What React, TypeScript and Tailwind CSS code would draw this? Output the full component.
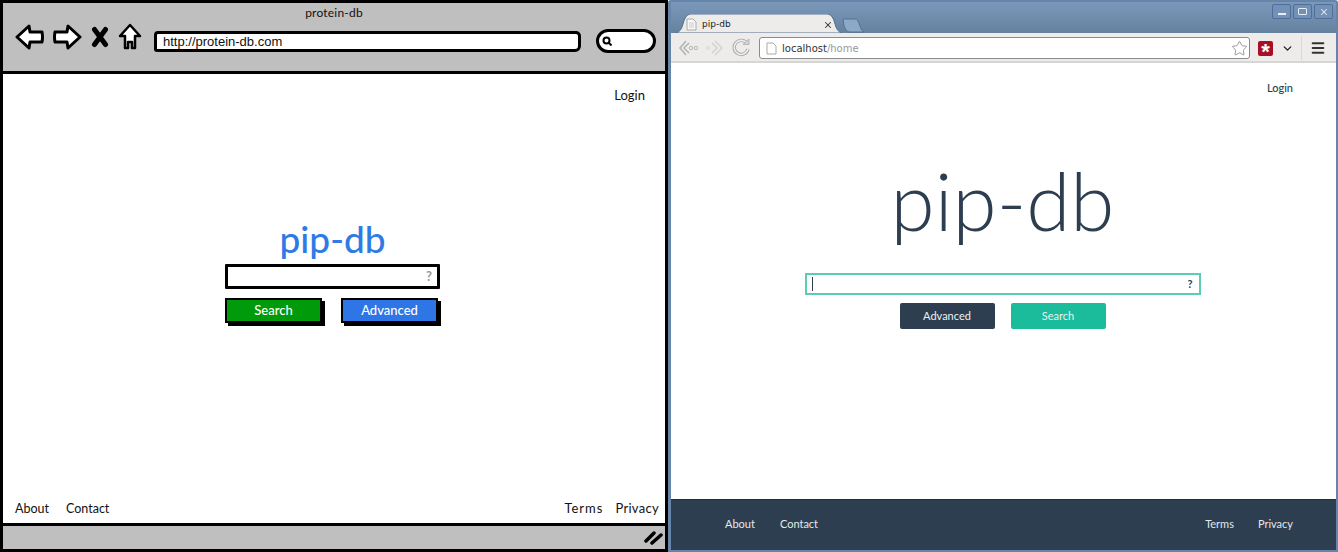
import { Star, X, ChevronDown, Menu } from "lucide-react";

function SketchIcons() {
  return (
    <div className="flex items-center shrink-0">
      <svg width="30" height="28" viewBox="0 0 30 28" className="ml-[12px]">
        <path d="M2 14 L14 3 L15 9 L27 9 Q28 14 27 19 L15 19 L14 25 Z" fill="#fff" stroke="#000" strokeWidth="3" strokeLinejoin="round" />
      </svg>
      <svg width="30" height="28" viewBox="0 0 30 28" className="ml-[7px]">
        <path d="M28 14 L16 3 L15 9 L3 9 Q2 14 3 19 L15 19 L16 25 Z" fill="#fff" stroke="#000" strokeWidth="3" strokeLinejoin="round" />
      </svg>
      <svg width="18" height="22" viewBox="0 0 18 22" className="ml-[9px]">
        <path d="M3.5 3.5 L14.5 18.5 M14.5 3.5 L3.5 18.5" fill="none" stroke="#000" strokeWidth="5" strokeLinecap="round" />
      </svg>
      <svg width="24" height="28" viewBox="0 0 24 28" className="ml-[9px]">
        <path d="M12 2 L22 13 L17 13 L17 25 L14 25 L14 19 L10 19 L10 25 L7 25 L7 13 L2 13 Z" fill="#fff" stroke="#000" strokeWidth="2.5" strokeLinejoin="round" />
      </svg>
    </div>
  );
}

function Mockup() {
  return (
    <div className="w-[668px] h-[552px] shrink-0 flex flex-col border-[3px] border-black bg-white font-['Lato','Liberation_Sans',sans-serif] text-[#111]">
      <div className="h-[71px] shrink-0 bg-[#bfbfbf] border-b-[3px] border-black">
        <div className="text-center text-[12px] leading-[16px] pt-[2px] tracking-[0.2px]">protein-db</div>
        <div className="flex items-center">
          <SketchIcons />
          <div className="ml-[12px] mt-[8px] w-[427px] h-[21px] bg-white border-[3px] border-black rounded-[4px_5px_6px_3px] flex items-center pl-[6px] text-[13px] leading-none font-['Liberation_Sans',sans-serif]">
            http://protein-db.com
          </div>
          <div className="ml-[15px] mt-[8px] w-[60px] h-[24px] bg-white border-[3px] border-black rounded-full flex items-center pl-[3px]">
            <svg width="10" height="10" viewBox="0 0 10 10">
              <circle cx="4.5" cy="4.5" r="3" fill="none" stroke="#000" strokeWidth="2" />
              <path d="M7 7 L9.5 9.5" stroke="#000" strokeWidth="2" />
            </svg>
          </div>
        </div>
      </div>

      <div className="flex-1 flex flex-col min-h-0">
        <div className="flex justify-end pr-[20px] pt-[13px] text-[13px] leading-[17px]">Login</div>
        <div className="ml-[222px] w-[215px] mt-[113px] text-center text-[#2f7ae5] text-[37px] leading-[44px] font-medium">pip-db</div>
        <div className="ml-[222px] mt-[3px] w-[215px] h-[25px] border-[3px] border-black rounded-[1px] bg-white flex items-center justify-end pr-[5px] text-[13px] font-bold text-[#999]">
          ?
        </div>
        <div className="ml-[222px] mt-[9px] flex gap-[19px]">
          <button className="w-[97px] h-[25px] bg-[#009a0a] border-2 border-black shadow-[3px_3px_0_#000] text-white text-[13px] font-medium leading-none">
            Search
          </button>
          <button className="w-[97px] h-[25px] bg-[#2e75e6] border-2 border-black shadow-[3px_3px_0_#000] text-white text-[13px] font-medium leading-none">
            Advanced
          </button>
        </div>
        <div className="mt-auto flex justify-between pl-[12px] pr-[6px] pb-[6px] text-[13px] leading-[17px]">
          <div className="flex gap-[17px] text-[12.5px]">
            <span>About</span>
            <span>Contact</span>
          </div>
          <div className="flex gap-[12px]">
            <span className="tracking-[1px]">Terms</span>
            <span className="tracking-[0.3px]">Privacy</span>
          </div>
        </div>
      </div>

      <div className="h-[26px] shrink-0 bg-[#bfbfbf] border-t-[3px] border-black flex items-center justify-end pr-[1px]">
        <svg width="20" height="16" viewBox="0 0 20 16">
          <path d="M2 11 L10 3 M8 13 L17 5" stroke="#000" strokeWidth="3.5" strokeLinecap="round" />
        </svg>
      </div>
    </div>
  );
}

function WindowButton({ children }: { children: React.ReactNode }) {
  return (
    <div className="w-[19px] h-[15px] rounded-[2px] border border-[#4f6e98] bg-[#7391b6] flex items-center justify-center text-[#e8eef5]">
      {children}
    </div>
  );
}

function Browser() {
  return (
    <div className="w-[670px] h-[552px] shrink-0 flex flex-col border-[2px] border-l-[3px] border-[#6784a9] rounded-t-[3px] bg-white font-['Lato','Liberation_Sans',sans-serif] text-[#2c3e50]">
      <div className="h-[31px] shrink-0 bg-gradient-to-b from-[#7b98bb] to-[#64829f] flex items-end relative pl-[5px]">
        <div className="relative w-[166px] h-[19px]">
          <svg width="166" height="19" viewBox="0 0 166 19" className="absolute inset-0">
            <path d="M0 19 Q5 18 7 10 Q9 1 14 0 L152 0 Q157 1 159 10 Q161 18 166 19 Z" fill="#edecea" stroke="#56708f" strokeWidth="1" />
          </svg>
          <div className="relative flex items-center h-full pt-[2px] pl-[10px] pr-[9px] font-['DejaVu_Sans',sans-serif]">
            <svg width="11" height="13" viewBox="0 0 11 13">
              <path d="M1 1 H7 L10 4 V12 H1 Z" fill="#f7f7f7" stroke="#aaa" />
              <path d="M3 5H8 M3 7H8 M3 9H8" stroke="#ccc" />
            </svg>
            <span className="ml-[5px] text-[9px] text-[#222]">pip-db</span>
            <X size={10} strokeWidth={2.5} className="ml-auto text-[#333]" />
          </div>
        </div>
        <svg width="24" height="15" viewBox="0 0 24 15" className="-ml-[1px]">
          <path d="M2 1 L14 1 Q17 1 19 8 Q20 13 23 14 L8 14 Q5 14 3 8 Z" fill="#8ea8c8" stroke="#56708f" />
        </svg>
        <div className="absolute right-[3px] top-[2px] flex gap-[2px]">
          <WindowButton><span className="block w-[8px] h-[2px] bg-[#e8eef5] mt-[4px]" /></WindowButton>
          <WindowButton><span className="block w-[9px] h-[7px] border border-[#e8eef5] rounded-[1px]" /></WindowButton>
          <WindowButton><X size={10} strokeWidth={2.5} /></WindowButton>
        </div>
      </div>

      <div className="h-[30px] shrink-0 bg-[#edecea] border-b-2 border-[#d6d6d4] flex items-center pt-[2px]">
        <svg width="22" height="18" viewBox="0 0 22 18" className="ml-[6px]">
          <path d="M9 2 L3 9 L9 16 M12 4 L7 9 L12 14" fill="none" stroke="#b4b4b4" strokeWidth="1.6" />
          <circle cx="14" cy="9" r="1.7" fill="none" stroke="#b4b4b4" />
          <circle cx="19" cy="9" r="1.7" fill="none" stroke="#b4b4b4" />
        </svg>
        <svg width="20" height="18" viewBox="0 0 20 18" className="ml-[6px]">
          <path d="M10 2 L17 9 L10 16 M7 4 L12 9 L7 14" fill="none" stroke="#d4d4d4" strokeWidth="1.6" />
          <circle cx="3" cy="9" r="1.5" fill="none" stroke="#d8d8d8" />
        </svg>
        <svg width="20" height="20" viewBox="0 0 20 20" className="ml-[6px]">
          <path d="M16 5.5 A7 7 0 1 0 17 11" fill="none" stroke="#ababab" strokeWidth="3.4" />
          <path d="M16 5.5 A7 7 0 1 0 17 11" fill="none" stroke="#ececec" strokeWidth="1.6" />
          <path d="M12 6.5 H18 V1 Z" fill="#d6d6d6" stroke="#ababab" strokeWidth="0.8" />
        </svg>
        <div className="ml-[8px] w-[491px] h-[22px] bg-white border border-[#8b8b8b] rounded-[3px] flex items-center pl-[6px] text-[10px] font-['DejaVu_Sans',sans-serif]">
          <svg width="11" height="13" viewBox="0 0 11 13">
            <path d="M1 1 H7 L10 4 V12 H1 Z" fill="#fff" stroke="#aaa" />
          </svg>
          <span className="ml-[5px] text-[#333]">localhost</span>
          <span className="text-[#999]">/home</span>
          <Star size={17} strokeWidth={1.2} className="ml-auto mr-[1px] text-[#888]" />
        </div>
        <div className="ml-[8px] w-[15px] h-[15px] rounded-[2px] bg-[#a80f26] flex items-center justify-center text-white text-[22px] font-bold leading-none pt-[8px] font-['Liberation_Sans',sans-serif]">
          *
        </div>
        <ChevronDown size={13} strokeWidth={2.5} className="ml-[8px] text-[#222]" />
        <div className="ml-[7px] w-px h-[24px] bg-[#d8d8d6]" />
        <Menu size={16} strokeWidth={3} className="ml-[8px] text-[#333]" />
      </div>

      <div className="flex-1 flex flex-col items-center min-h-0 pr-[2px]">
        <div className="self-end pr-[41px] pt-[17px] text-[11px] leading-[15px] font-medium">Login</div>
        <div className="mt-[50px] h-[110px] flex items-center text-[80px] leading-[110px] font-light">pip-db</div>
        <div className="mt-[18px] w-[396px] h-[22px] border-2 border-[#5ccdb5] flex items-center justify-between pl-[5px] pr-[6px] text-[11px] font-bold">
          <span className="block w-px h-[14px] bg-[#2c3e50]" />
          <span>?</span>
        </div>
        <div className="mt-[8px] flex gap-[16px] text-[11px]">
          <button className="w-[95px] h-[26px] rounded-[2px] bg-[#2c3e50] text-[#ecf0f1]">Advanced</button>
          <button className="w-[95px] h-[26px] rounded-[2px] bg-[#1abc9c] text-[#ecf0f1]">Search</button>
        </div>
      </div>

      <div className="h-[51px] shrink-0 bg-[#2c3e50] border-t border-[#1f2e3d] flex items-center justify-between pl-[54px] pr-[43px] pb-[1px] text-[11px] text-[#e4e8ea]">
        <div className="flex gap-[25px]">
          <span>About</span>
          <span>Contact</span>
        </div>
        <div className="flex gap-[24px]">
          <span>Terms</span>
          <span>Privacy</span>
        </div>
      </div>
    </div>
  );
}

export default function App() {
  return (
    <div className="flex w-[1338px] h-[552px] overflow-hidden bg-white">
      <Mockup />
      <Browser />
    </div>
  );
}
